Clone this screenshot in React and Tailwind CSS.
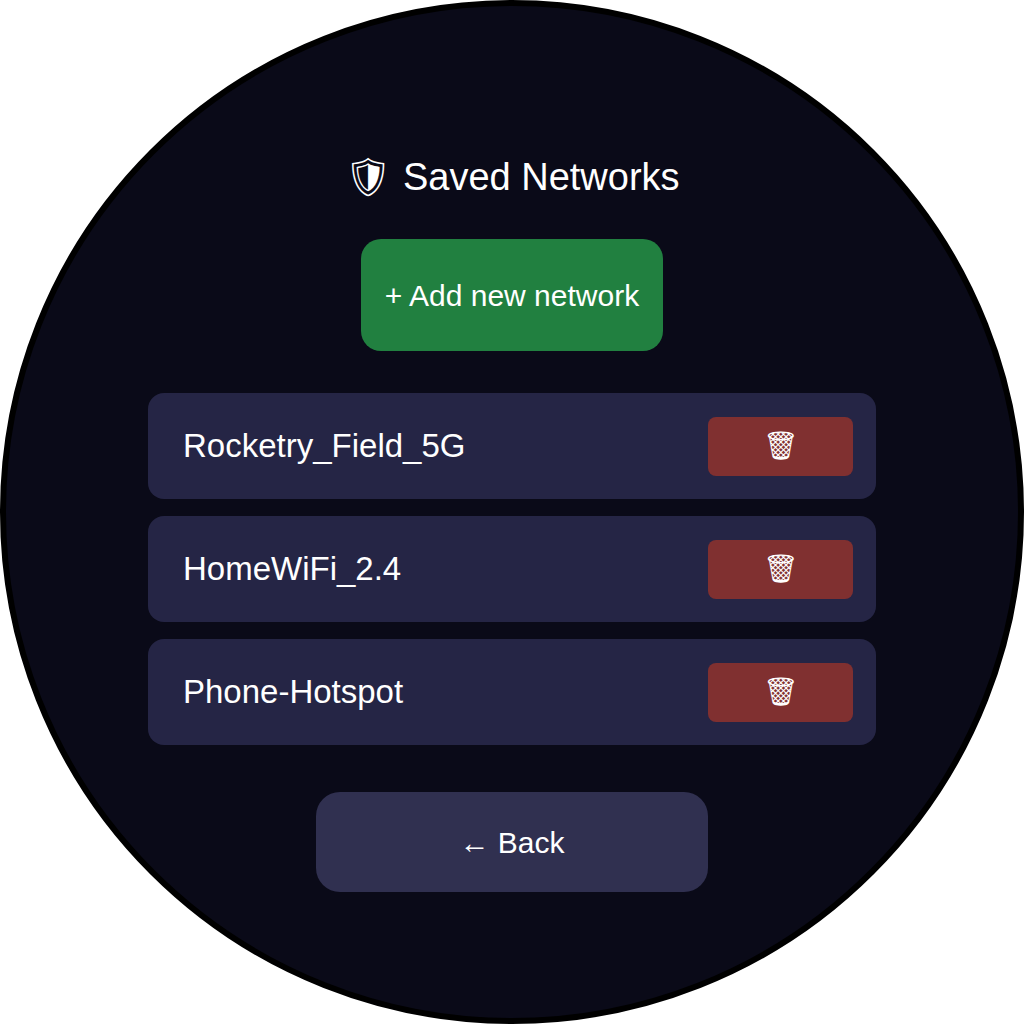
const NETWORKS = ["Rocketry_Field_5G", "HomeWiFi_2.4", "Phone-Hotspot"];

export default function App() {
  return (
    <div className="w-[1024px] h-[1024px] bg-white font-['Liberation_Sans','DejaVu_Sans',sans-serif] text-white">
      <div className="w-full h-full rounded-full border-[6px] border-black bg-[#0a0a18] flex flex-col items-center pt-[146px]">
        <h1 className="text-[38px] leading-[50px] font-normal">🛡 Saved Networks</h1>
        <button className="mt-[37px] w-[302px] h-[112px] rounded-[20px] bg-[#218040] text-[30px]">+ Add new network</button>
        <div className="mt-[42px] w-[728px] flex flex-col gap-[17px]">
          {NETWORKS.map((name) => (
            <div key={name} className="h-[106px] rounded-[16px] bg-[#252545] flex items-center justify-between pl-[35px] pr-[23px]">
              <span className="text-[33px]">{name}</span>
              <button className="w-[145px] h-[59px] rounded-[8px] bg-[#803030] text-[28px]">🗑</button>
            </div>
          ))}
        </div>
        <button className="mt-[47px] w-[392px] h-[100px] rounded-[24px] bg-[#303050] text-[30px]">← Back</button>
      </div>
    </div>
  );
}
